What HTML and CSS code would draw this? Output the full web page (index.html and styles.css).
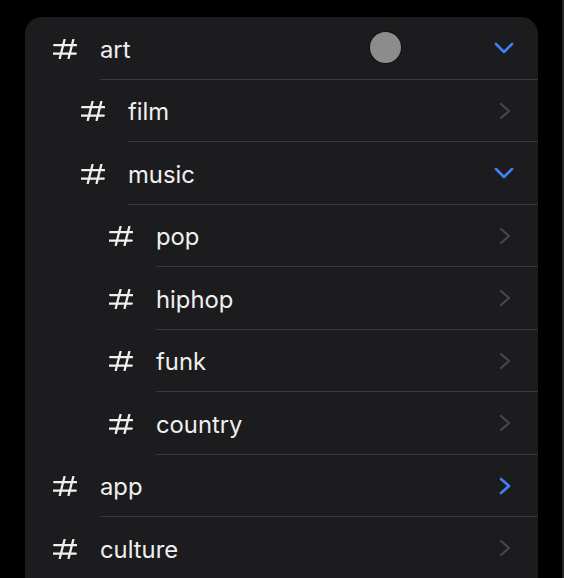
FILE: index.html
```html
<!DOCTYPE html>
<html>
<head>
<meta charset="utf-8">
<link rel="stylesheet" href="styles.css">
</head>
<body>
<div class="edge"></div>
<div class="card">
  <div class="row lvl0">
    <svg class="hash" viewBox="0 0 24 20"><path d="M11.5 0.8L6.8 19.2M20.3 0.8L15.6 19.2M1.2 6.2H23.4M0.6 14.6H22.8"/></svg>
    <div class="body"><span class="label">art</span><svg class="chev down" viewBox="0 0 20 12"><path d="M2 2L10 10L18 2"/></svg></div>
  </div>
  <div class="row lvl1">
    <svg class="hash" viewBox="0 0 24 20"><path d="M11.5 0.8L6.8 19.2M20.3 0.8L15.6 19.2M1.2 6.2H23.4M0.6 14.6H22.8"/></svg>
    <div class="body"><span class="label">film</span><svg class="chev right" viewBox="0 0 12 18"><path d="M2 2L10 9L2 16"/></svg></div>
  </div>
  <div class="row lvl1">
    <svg class="hash" viewBox="0 0 24 20"><path d="M11.5 0.8L6.8 19.2M20.3 0.8L15.6 19.2M1.2 6.2H23.4M0.6 14.6H22.8"/></svg>
    <div class="body"><span class="label">music</span><svg class="chev down" viewBox="0 0 20 12"><path d="M2 2L10 10L18 2"/></svg></div>
  </div>
  <div class="row lvl2">
    <svg class="hash" viewBox="0 0 24 20"><path d="M11.5 0.8L6.8 19.2M20.3 0.8L15.6 19.2M1.2 6.2H23.4M0.6 14.6H22.8"/></svg>
    <div class="body"><span class="label">pop</span><svg class="chev right" viewBox="0 0 12 18"><path d="M2 2L10 9L2 16"/></svg></div>
  </div>
  <div class="row lvl2">
    <svg class="hash" viewBox="0 0 24 20"><path d="M11.5 0.8L6.8 19.2M20.3 0.8L15.6 19.2M1.2 6.2H23.4M0.6 14.6H22.8"/></svg>
    <div class="body"><span class="label">hiphop</span><svg class="chev right" viewBox="0 0 12 18"><path d="M2 2L10 9L2 16"/></svg></div>
  </div>
  <div class="row lvl2">
    <svg class="hash" viewBox="0 0 24 20"><path d="M11.5 0.8L6.8 19.2M20.3 0.8L15.6 19.2M1.2 6.2H23.4M0.6 14.6H22.8"/></svg>
    <div class="body"><span class="label">funk</span><svg class="chev right" viewBox="0 0 12 18"><path d="M2 2L10 9L2 16"/></svg></div>
  </div>
  <div class="row lvl2">
    <svg class="hash" viewBox="0 0 24 20"><path d="M11.5 0.8L6.8 19.2M20.3 0.8L15.6 19.2M1.2 6.2H23.4M0.6 14.6H22.8"/></svg>
    <div class="body"><span class="label">country</span><svg class="chev right" viewBox="0 0 12 18"><path d="M2 2L10 9L2 16"/></svg></div>
  </div>
  <div class="row lvl0">
    <svg class="hash" viewBox="0 0 24 20"><path d="M11.5 0.8L6.8 19.2M20.3 0.8L15.6 19.2M1.2 6.2H23.4M0.6 14.6H22.8"/></svg>
    <div class="body"><span class="label">app</span><svg class="chev right active" viewBox="0 0 12 18"><path d="M2 2L10 9L2 16"/></svg></div>
  </div>
  <div class="row lvl0">
    <svg class="hash" viewBox="0 0 24 20"><path d="M11.5 0.8L6.8 19.2M20.3 0.8L15.6 19.2M1.2 6.2H23.4M0.6 14.6H22.8"/></svg>
    <div class="body"><span class="label">culture</span><svg class="chev right" viewBox="0 0 12 18"><path d="M2 2L10 9L2 16"/></svg></div>
  </div>
  <div class="touch"></div>
</div>
</body>
</html>
```

FILE: styles.css
```css
html, body {
  margin: 0;
  padding: 0;
  background: #000;
  height: 100%;
  overflow: hidden;
}
body {
  font-family: Inter, "Liberation Sans", sans-serif;
  position: relative;
}
.edge {
  position: absolute;
  top: 0;
  bottom: 0;
  left: 562px;
  width: 2px;
  background: #262626;
}
.card {
  position: relative;
  margin: 17px 0 0 25px;
  width: 513px;
  background: #1c1c1e;
  border-radius: 17px 17px 0 0;
  padding-left: 28px;
  box-sizing: border-box;
}
.row {
  display: flex;
  align-items: center;
  height: 62.5px;
}
.lvl1 { padding-left: 28px; }
.lvl2 { padding-left: 56px; }
.hash {
  flex: none;
  width: 24px;
  height: 20px;
  margin-right: 23px;
  margin-top: 1px;
  fill: none;
  stroke: #efefef;
  stroke-width: 2.3;
  stroke-linecap: round;
}
.body {
  flex: 1;
  align-self: stretch;
  display: flex;
  align-items: center;
  border-bottom: 1px solid #38383a;
  padding-right: 24px;
}
.label {
  flex: 1;
  color: #efefef;
  font-size: 23.8px;
  padding-top: 3px;
}
.chev {
  flex: none;
  fill: none;
  stroke-linecap: round;
  stroke-linejoin: round;
}
.chev.down {
  width: 20px;
  height: 12px;
  stroke: #3f80f2;
  stroke-width: 2.6;
  margin-top: 1px;
}
.chev.right {
  width: 12px;
  height: 18px;
  stroke: #48484b;
  stroke-width: 2.2;
  margin-right: 3px;
  margin-top: 1px;
}
.chev.right.active {
  stroke: #3f80f2;
  stroke-width: 2.6;
}
.touch {
  position: absolute;
  left: 345px;
  top: 15px;
  width: 31px;
  height: 31px;
  border-radius: 50%;
  background: #8c8c8c;
  box-shadow: 0 0 0 1px rgba(0,0,0,0.35);
}
```
